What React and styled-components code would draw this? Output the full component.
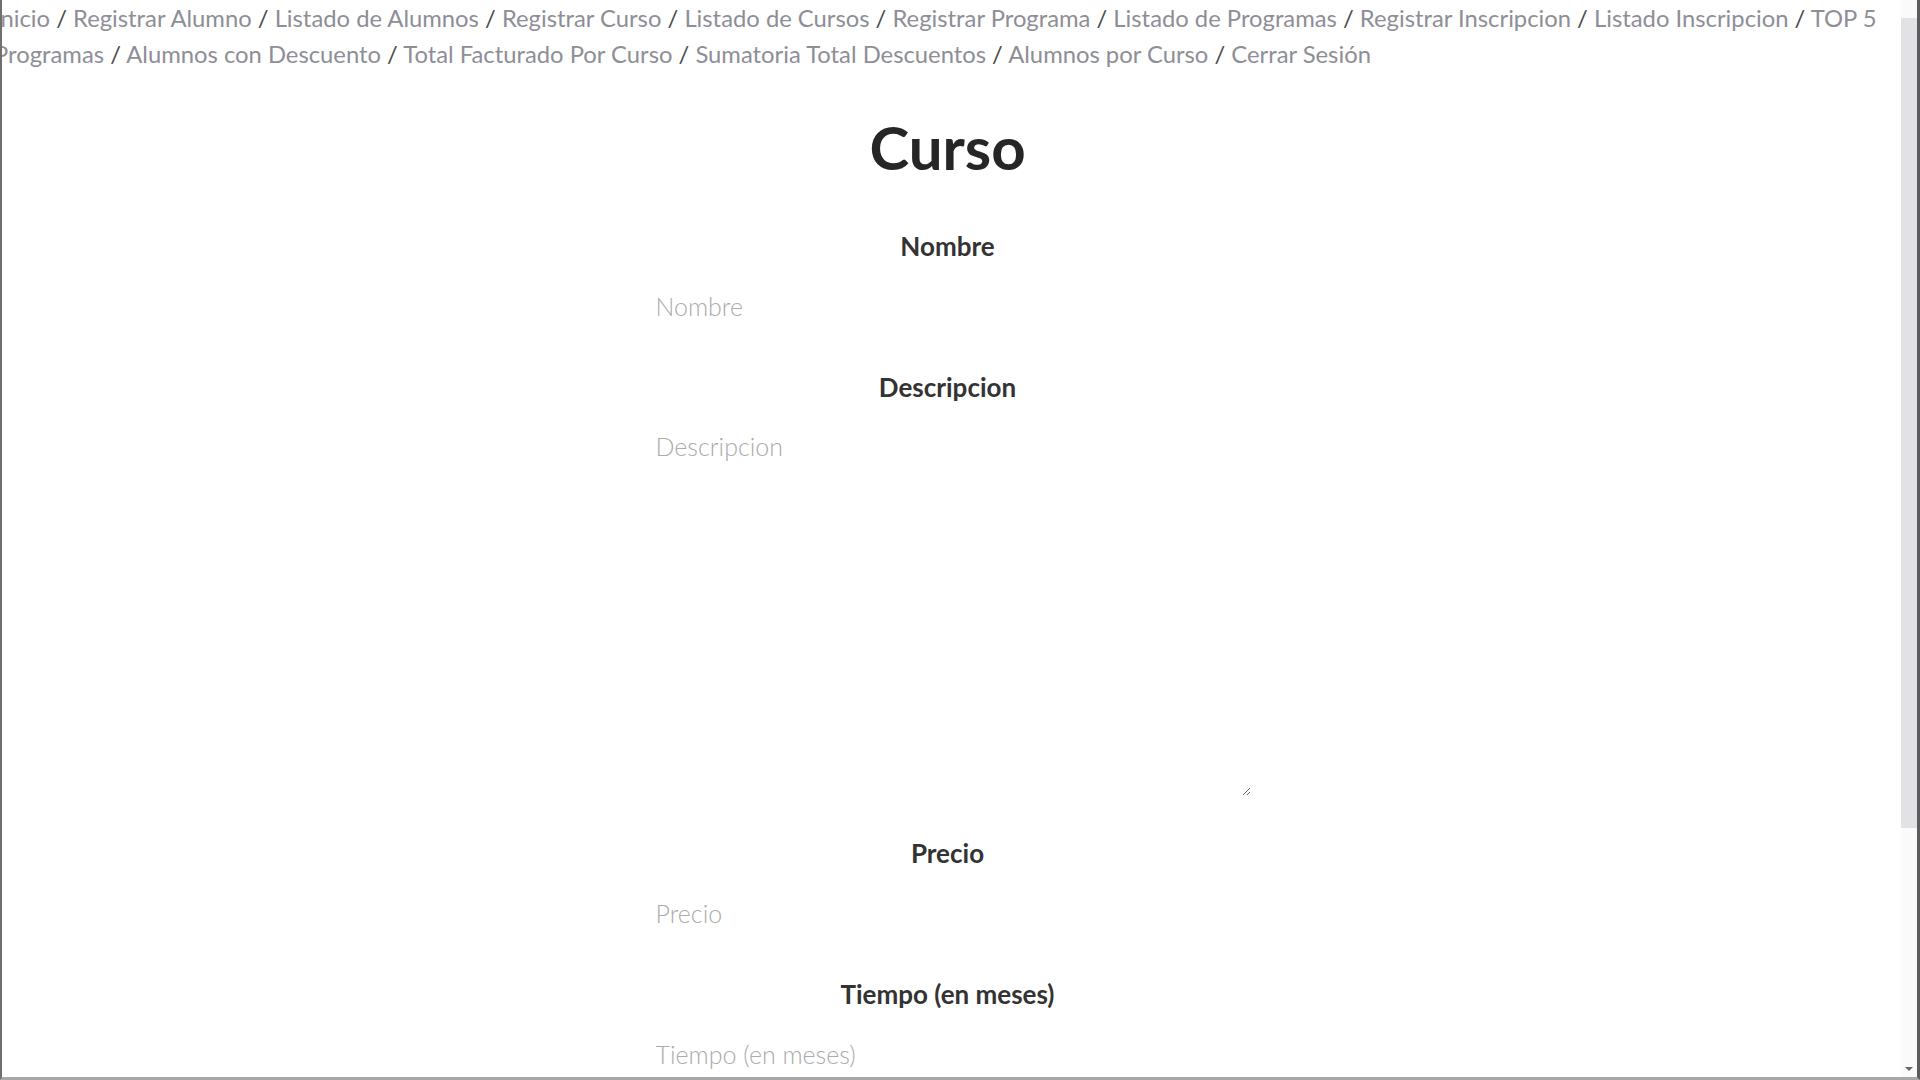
import React from 'react';
import styled, {createGlobalStyle} from 'styled-components';

const GlobalStyle = createGlobalStyle`
  html, body {
    margin: 0;
    padding: 0;
    background: #fff;
    overflow: hidden;
  }

  body {
    font-family: Lato, "Open Sans", "Liberation Sans", sans-serif;
  }
`;

const Window = styled.div`
  display: flex;
  height: 100vh;
  box-sizing: border-box;
  border-left: 2px solid #6f6f6f;
  border-bottom: 3px solid #a8a8a8;
  border-right: 3px solid #5c5c5c;
  overflow: hidden;
`;

const Page = styled.div`
  flex: 1;
  min-width: 0;
  padding-right: 8px;
  overflow: hidden;
`;

const Nav = styled.nav`
  margin-left: -8px;
  font-size: 23.8px;
  line-height: 36px;
  color: #4a4a4a;
`;

const NavLink = styled.a`
  color: #8e8e97;
  text-decoration: none;
`;

const Title = styled.h1`
  margin: 39px 0 48px;
  text-align: center;
  font-size: 60px;
  line-height: 72px;
  font-weight: 700;
  color: #262626;
`;

const Form = styled.form`
  width: 606px;
  margin: 0 auto;
  display: flex;
  flex-direction: column;
`;

const Field = styled.div`
  display: flex;
  flex-direction: column;
  margin-bottom: 42px;
`;

const Label = styled.label`
  text-align: center;
  font-size: 26px;
  line-height: 30px;
  font-weight: 700;
  color: #333;
  margin-bottom: 21px;
`;

const Input = styled.input`
  box-sizing: border-box;
  height: 48px;
  padding: 0 11px;
  border: none;
  outline: none;
  font-family: inherit;
  font-size: 25px;
  font-weight: 300;
  color: #333;
  background: transparent;

  &::placeholder {
    color: #ababab;
  }
`;

const TextArea = styled.textarea`
  box-sizing: border-box;
  height: 373px;
  padding: 9px 11px;
  border: none;
  outline: none;
  font-family: inherit;
  font-size: 25px;
  line-height: 28px;
  font-weight: 300;
  color: #333;
  background: transparent;
  resize: vertical;

  &::placeholder {
    color: #ababab;
  }
`;

const Scrollbar = styled.div`
  width: 16px;
  display: flex;
  flex-direction: column;
  background: #fafafa;
`;

const Thumb = styled.div`
  margin-top: 18px;
  height: 810px;
  background: #e2e1e6;
`;

const Arrow = styled.div`
  margin-top: auto;
  margin-bottom: 6px;
  align-self: center;
  width: 0;
  height: 0;
  border-left: 4px solid transparent;
  border-right: 4px solid transparent;
  border-top: 4px solid #666;
`;

const links = [
  'Inicio',
  'Registrar Alumno',
  'Listado de Alumnos',
  'Registrar Curso',
  'Listado de Cursos',
  'Registrar Programa',
  'Listado de Programas',
  'Registrar Inscripcion',
  'Listado Inscripcion',
  'TOP 5 Programas',
  'Alumnos con Descuento',
  'Total Facturado Por Curso',
  'Sumatoria Total Descuentos',
  'Alumnos por Curso',
  'Cerrar Sesión',
];

const fields = [
  {name: 'nombre', label: 'Nombre'},
  {name: 'descripcion', label: 'Descripcion', multiline: true},
  {name: 'precio', label: 'Precio'},
  {name: 'tiempo', label: 'Tiempo (en meses)'},
];

export default function App() {
  return (
    <>
      <GlobalStyle/>
      <Window>
        <Page>
          <Nav>
            {links.map((link, index) => (
              <React.Fragment key={link}>
                {index > 0 && ' / '}
                <NavLink href="#">{link}</NavLink>
              </React.Fragment>
            ))}
          </Nav>

          <Title>Curso</Title>

          <Form onSubmit={e => e.preventDefault()}>
            {fields.map(field => (
              <Field key={field.name}>
                <Label htmlFor={field.name}>{field.label}</Label>
                {field.multiline
                  ? <TextArea id={field.name} placeholder={field.label}/>
                  : <Input id={field.name} placeholder={field.label}/>
                }
              </Field>
            ))}
          </Form>
        </Page>
        <Scrollbar>
          <Thumb/>
          <Arrow/>
        </Scrollbar>
      </Window>
    </>
  );
}
